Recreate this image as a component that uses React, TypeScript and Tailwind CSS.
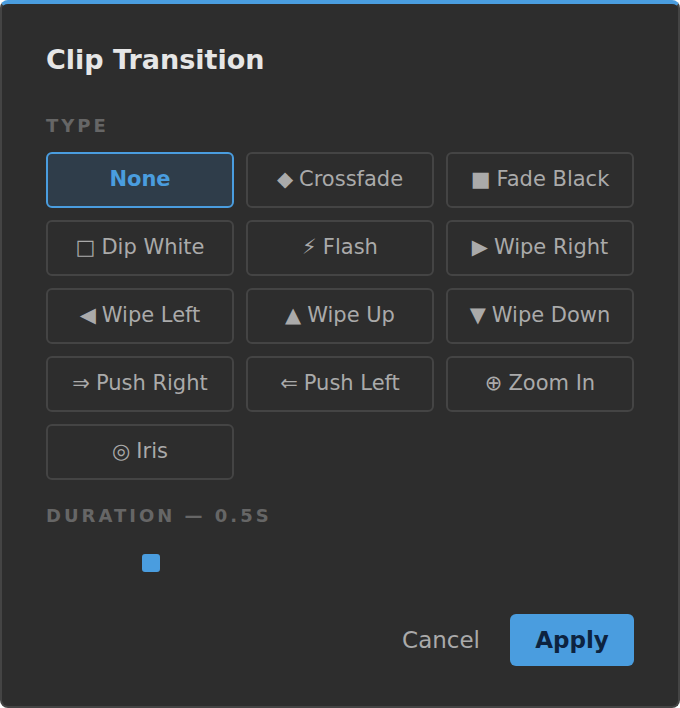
import React from "react";

const items: { icon: string; label: string }[] = [
  { icon: "", label: "None" },
  { icon: "◆", label: "Crossfade" },
  { icon: "■", label: "Fade Black" },
  { icon: "□", label: "Dip White" },
  { icon: "⚡", label: "Flash" },
  { icon: "▶", label: "Wipe Right" },
  { icon: "◀", label: "Wipe Left" },
  { icon: "▲", label: "Wipe Up" },
  { icon: "▼", label: "Wipe Down" },
  { icon: "⇒", label: "Push Right" },
  { icon: "⇐", label: "Push Left" },
  { icon: "⊕", label: "Zoom In" },
  { icon: "◎", label: "Iris" },
];

export default function App() {
  return (
    <div
      className="w-[680px] h-[708px] bg-[#2d2d2d] border-2 border-[#444444] border-t-4 border-t-[#4a9ddf] rounded-lg px-[44px] flex flex-col"
      style={{ fontFamily: '"DejaVu Sans", sans-serif' }}
    >
      <h1 className="mt-[40px] text-[27px] leading-[32px] font-bold text-[#e6e6e6]">Clip Transition</h1>
      <div className="mt-[39px] text-[18px] leading-[22px] font-bold tracking-[3px] text-[#666666]">TYPE</div>
      <div className="mt-[15px] grid grid-cols-3 gap-[12px]">
        {items.map((it) => {
          const sel = it.label === "None";
          return (
            <div
              key={it.label}
              className={
                sel
                  ? "h-[56px] flex items-center justify-center rounded-md border-2 border-[#4a9ddf] bg-[#2f3d4a] text-[#4a9ddf] font-bold text-[21px]"
                  : "h-[56px] flex items-center justify-center rounded-md border-2 border-[#444444] text-[#aaaaaa] text-[21px]"
              }
            >
              {it.icon ? <span className="mr-[6px]">{it.icon}</span> : null}
              {it.label}
            </div>
          );
        })}
      </div>
      <div className="mt-[25px] text-[18px] leading-[22px] font-bold tracking-[3px] text-[#666666]">DURATION — 0.5S</div>
      <div className="mt-[27px] h-[18px] relative">
        <div className="absolute left-[96px] top-0 w-[18px] h-[18px] rounded-[3px] bg-[#4a9ddf]" />
      </div>
      <div className="mt-[42px] flex items-center justify-end gap-[30px]">
        <button className="text-[23px] text-[#aaaaaa]">Cancel</button>
        <button className="w-[124px] h-[52px] rounded-md bg-[#4a9ddf] text-[23px] font-bold text-[#0d2340]">Apply</button>
      </div>
    </div>
  );
}
